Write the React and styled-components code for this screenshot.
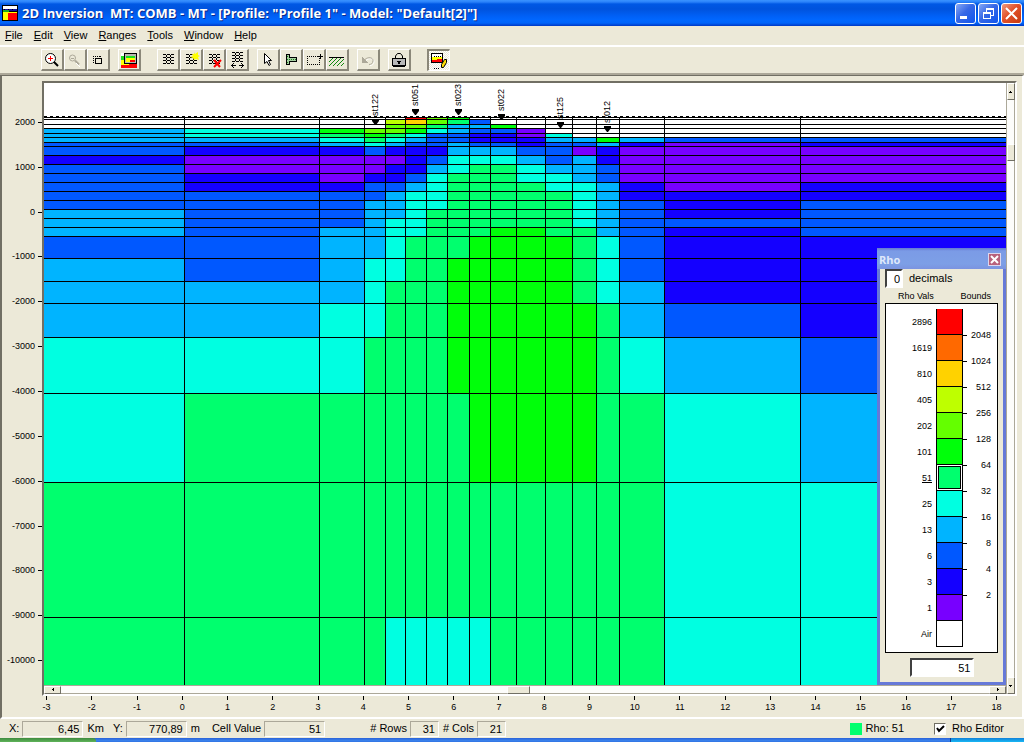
import React, { useState } from "react";
import styled, { createGlobalStyle, css } from "styled-components";

const GlobalStyle = createGlobalStyle`
  * { box-sizing: border-box; }
  body {
    margin: 0;
    background: #ece9d8;
    color: #000;
    font: 11px/13px "Liberation Sans", Arial, sans-serif;
  }
  button, input { font: inherit; color: inherit; margin: 0; padding: 0; border-radius: 0; }
`;

const FACE = "#ece9d8";
const SHADE = "#aca899";
const DARK = "#716f64";

const RHO = {
  W: "#ffffff",
  V: "#7800ff",
  B: "#1400ff",
  b: "#0058ff",
  c: "#00b4ff",
  a: "#00ffe1",
  g: "#00ff6e",
  G: "#00ff0a",
  L: "#64ff00",
  Y: "#beff00",
  y: "#ffd200",
  O: "#ff6900",
  R: "#ff0000",
};

/* ---------- window frame ---------- */

const AppWindow = styled.div`
  min-height: 100vh;
  display: flex;
  flex-direction: column;
`;

const TitleBar = styled.header`
  height: 26px;
  display: flex;
  align-items: center;
  gap: 4px;
  padding: 0 2px;
  background: linear-gradient(#3a93ff 0, #2a82fa 2px, #0058e4 4px, #0053dd 9px, #0060f6 16px, #0067ff 20px, #0064fa 23px, #0038c4 26px);
`;

const WindowTitle = styled.h1`
  flex: 1;
  margin: 0;
  color: #fff;
  font: bold 13px/18px "Open Sans", "Liberation Sans", sans-serif;
  text-shadow: 1px 1px 0 #0a2a8c;
  white-space: pre;
`;

const CaptionButtons = styled.div`
  display: flex;
  gap: 2px;
`;

const CaptionButton = styled.button`
  width: 21px;
  height: 21px;
  border: 1px solid #fff;
  border-radius: 3px;
  background: ${(p) =>
    p.$close
      ? "linear-gradient(135deg, #ee9a80, #e2512a 45%, #c63a10)"
      : "linear-gradient(135deg, #86a8f6, #3768e6 45%, #0f55ee)"};
  svg { display: block; }
`;

const MenuBar = styled.nav`
  height: 19px;
  display: flex;
  align-items: center;
  gap: 11px;
  padding: 0 5px;
`;

const MenuItem = styled.button`
  border: 0;
  background: none;
  line-height: 15px;
  u { text-underline-offset: 1px; }
`;

const ToolBar = styled.div`
  display: flex;
  gap: 8px;
  padding: 2px 0 2px 41px;
  border-top: 2px solid #fff;
  border-bottom: 2px solid ${SHADE};
`;

const ToolGroup = styled.div`
  display: flex;
  margin-right: ${(p) => (p.$wide ? "8px" : "0")};
`;

const ToolButton = styled.button`
  width: 23px;
  height: 22px;
  border: solid;
  border-width: 1px 2px 2px 1px;
  border-color: #fff #8b887a #8b887a #fff;
  background: ${FACE};
  svg { display: block; }
  ${(p) =>
    p.$pressed &&
    css`
      border-width: 2px 1px 1px 2px;
      border-color: #8b887a #fff #fff #8b887a;
      background: repeating-conic-gradient(#fff 0 25%, ${FACE} 0 50%) 0 0 / 2px 2px;
    `}
`;

/* ---------- work area ---------- */

const WorkArea = styled.main`
  flex: 1;
  border: solid;
  border-width: 1px 2px 2px 2px;
  border-color: ${DARK} #fff #fff ${DARK};
  padding: 5px 5px 0 0;
`;

const PlotRow = styled.div`
  display: flex;
`;

const YAxis = styled.div`
  width: 40px;
  padding-top: 19px;
  display: flex;
  flex-direction: column;
  height: 602px;
`;

const YTick = styled.div`
  flex: 1;
  display: flex;
  align-items: center;
  justify-content: flex-end;
  gap: 3px;
  font-size: 9px;
  line-height: 11px;
  &::after {
    content: "";
    width: 4px;
    height: 1px;
    background: #000;
  }
`;

const PlotFrame = styled.div`
  flex: 1;
  min-width: 0;
  display: flex;
  border: solid;
  border-width: 2px;
  border-color: ${DARK} #fff #fff ${DARK};
`;

const PlotColumn = styled.div`
  flex: 1;
  min-width: 0;
`;

const Canvas = styled.div`
  position: relative;
  height: 602px;
  background: #fff;
  > svg { display: block; width: 100%; height: 100%; }
`;

const Station = styled.div`
  position: absolute;
  left: ${(p) => p.$x}%;
  top: ${(p) => p.$tip}px;
  display: flex;
  flex-direction: column;
  align-items: center;
  gap: 3px;
  transform: translate(-50%, -100%);
  font-size: 9px;
  line-height: 10px;
`;

const StationName = styled.span`
  writing-mode: vertical-rl;
  transform: rotate(180deg);
`;

const XAxis = styled.div`
  display: flex;
  margin-right: -2px;
  padding-left: 22px;
  height: 20px;
`;

const XTick = styled.div`
  flex: 1;
  display: flex;
  flex-direction: column;
  align-items: center;
  gap: 2px;
  font-size: 9px;
  line-height: 11px;
  &::before {
    content: "";
    width: 1px;
    height: 4px;
    background: #000;
  }
`;

const ScrollTrack = styled.div`
  display: flex;
  align-items: center;
  justify-content: space-between;
  background: #fdfdfb;
  border: solid ${SHADE};
  flex-direction: ${(p) => (p.$vertical ? "column" : "row")};
  border-width: ${(p) => (p.$vertical ? "0 1px" : "1px 0")};
  ${(p) => (p.$vertical ? "width: 9px;" : "height: 9px;")}
`;

const ScrollPart = styled.button`
  ${(p) => (p.$vertical ? "width: 8px; height: 17px;" : "width: 17px; height: 8px;")}
  display: grid;
  place-items: center;
  border: 1px solid;
  border-color: #fff ${DARK} ${DARK} #fff;
  background: ${FACE};
`;

const ScrollThumb = styled(ScrollPart)`
  ${(p) => (p.$vertical ? "margin-bottom: 472px;" : "width: 23px; margin-right: 13px;")}
`;

/* ---------- Rho palette ---------- */

const Palette = styled.section`
  position: absolute;
  right: 0;
  bottom: 0;
  width: 129px;
  border: 3px solid #6679d8;
  border-top: 0;
  background: ${FACE};
`;

const PaletteTitle = styled.header`
  display: flex;
  align-items: center;
  justify-content: space-between;
  height: 21px;
  margin: 0 -3px;
  padding: 2px 5px 0 2px;
  background: linear-gradient(#6478d0, #7b9be6 3px, #7d9fe6 16px, #7b93e0);
  color: #dfe8fb;
  font: bold 11px/15px "Open Sans", "Liberation Sans", sans-serif;
`;

const PaletteClose = styled.button`
  width: 13px;
  height: 13px;
  border: 1px solid #dcd6ee;
  background: #b8617c;
  svg { display: block; }
`;

const DecimalsRow = styled.label`
  display: flex;
  align-items: center;
  gap: 6px;
  padding-left: 5px;
  height: 19px;
`;

const TextField = styled.input`
  width: ${(p) => p.$w}px;
  height: 19px;
  padding-right: 1px;
  border: 2px solid;
  border-color: #404040 #fff #fff #404040;
  background: #fff;
  text-align: right;
`;

const ScaleHead = styled.div`
  display: flex;
  justify-content: space-between;
  padding: 3px 12px 1px 18px;
  font-size: 9px;
  line-height: 11px;
`;

const Scale = styled.div`
  display: flex;
  margin: 0 5px;
  padding: 5px 0;
  border: 1px solid #000;
  background: #fff;
  font-size: 9px;
  line-height: 11px;
`;

const ScaleValues = styled.div`
  width: 50px;
  padding-right: 4px;
`;

const ScaleValue = styled.div`
  height: 26px;
  display: flex;
  align-items: center;
  justify-content: flex-end;
  text-decoration: ${(p) => (p.$selected ? "underline" : "none")};
`;

const Swatches = styled.div`
  width: 27px;
  border: solid #000;
  border-width: 0 1px;
`;

const Swatch = styled.button`
  display: block;
  width: 100%;
  height: 26px;
  border: 0;
  border-bottom: 1px solid #000;
  background: ${(p) => RHO[p.$tone]};
  ${(p) => p.$selected && "box-shadow: inset 0 0 0 1px #fff, inset 0 0 0 2px #000;"}
`;

const ScaleBounds = styled.div`
  flex: 1;
  padding: 13px 6px 0 0;
`;

const ScaleBound = styled.div`
  height: 26px;
  display: flex;
  align-items: center;
  justify-content: space-between;
  &::before {
    content: "";
    width: 4px;
    height: 1px;
    background: #000;
  }
`;

const CurrentValue = styled.div`
  display: flex;
  justify-content: center;
  padding: 5px 0 5px;
`;

/* ---------- status bar ---------- */

const StatusBar = styled.footer`
  display: flex;
  align-items: center;
  height: 19px;
  padding: 0 20px 0 9px;
`;

const Reading = styled.div`
  display: flex;
  align-items: center;
  gap: 3px;
  margin-right: ${(p) => p.$after}px;
  white-space: nowrap;
`;

const Readout = styled.output`
  width: ${(p) => (p.$short ? 29 : 61)}px;
  height: 16px;
  padding-right: 3px;
  border: 1px solid;
  border-color: ${SHADE} #fff #fff ${SHADE};
  text-align: right;
  line-height: 15px;
`;

const RhoSample = styled.span`
  width: 12px;
  height: 12px;
  background: ${RHO.g};
`;

const StatusRight = styled.div`
  margin-left: auto;
  display: flex;
`;

const CheckLabel = styled.label`
  position: relative;
  display: flex;
  align-items: center;
  gap: 6px;
  svg { position: absolute; left: 0; pointer-events: none; }
`;

const CheckBox = styled.input`
  appearance: none;
  width: 12px;
  height: 12px;
  border: 1px solid;
  border-color: ${DARK} #fff #fff ${DARK};
  background: #fff;
`;

const TaskStrip = styled.div`
  height: 4px;
  display: flex;
  background: linear-gradient(#2a62d8, #3c86ee 3px, #2a6ade);
`;

const StartEdge = styled.div`
  width: 96px;
  border-top-right-radius: 3px;
  background: linear-gradient(#3f8a3f, #5fb45a);
`;

const TrayEdge = styled.div`
  width: 74px;
  margin-left: auto;
  border-left: 1px solid #103a90;
  background: linear-gradient(#1280d8, #18b8f4);
`;

/* ---------- icons ---------- */

const Icon = ({ children, w = 20, h = 19 }) => (
  <svg width={w} height={h} viewBox={`0 0 ${w} ${h}`} shapeRendering="crispEdges" aria-hidden="true">
    {children}
  </svg>
);

const Mesh = ({ y = 0 }) => (
  <g transform={`translate(0 ${y})`} stroke="#000" fill="none">
    <path d="M5 4.500h3m1 0h3m1 0h3M5 7.500h3m1 0h3m1 0h3M5 10.500h3m1 0h3m1 0h3M5 13.500h3m1 0h3m1 0h3" />
    <path d="M8.500 5v2m0 1v2m0 1v2M12.500 5v2m0 1v2m0 1v2" />
  </g>
);

const icons = {
  zoomIn: (
    <Icon>
      <circle cx="8.500" cy="8.500" r="5" fill="#fff" stroke="#000" shapeRendering="auto" />
      <path d="M6 8.500h5M8.500 6v5" stroke="#f00" />
      <path d="M12 12l4 4" stroke="#000" strokeWidth="2" shapeRendering="auto" />
    </Icon>
  ),
  zoomOut: (
    <Icon>
      <circle cx="7.500" cy="8" r="3" fill="none" stroke={SHADE} shapeRendering="auto" />
      <path d="M6 8.500h3" stroke={SHADE} />
      <path d="M10 10.500l4 4" stroke={SHADE} strokeWidth="2" shapeRendering="auto" />
      <path d="M11 13l4 4" stroke="#fff" shapeRendering="auto" />
    </Icon>
  ),
  extents: (
    <Icon>
      <path d="M5 6.500h8M5 12.500h3M5.500 6v7M12.500 6v3" stroke="#000" strokeDasharray="1 1" />
      <rect x="7.500" y="8.500" width="6" height="5" fill="none" stroke="#000" />
    </Icon>
  ),
  model: (
    <Icon>
      <path d="M2 3h3v3H2z" fill="#fff" />
      <path d="M2 6h4v4H2z" fill="#1fe01f" />
      <path d="M2 10h4v4H2z" fill="#ff0" />
      <path d="M2 14h16v4H2z" fill="#f00" />
      <path d="M2 14h8v1H2z" fill="#ff0" />
      <path d="M5 3h13v11H5z" fill="#000" />
      <path d="M6 4h11v9H6z" fill="#b8b8b0" />
      <path d="M7 6h9v6H7z" fill="#1fe01f" />
      <path d="M7 8h9v4H7z" fill="#ff0" />
      <path d="M11 10h5v2h-5z" fill="#f00" />
    </Icon>
  ),
  mesh: <Icon><Mesh /></Icon>,
  meshNew: (
    <Icon>
      <Mesh />
      <path d="M13 2l1 2 3-2v3l2 1-2 1 1 3-3-1-2 1-1-2-3-1 3-1-1-2 2 0z" fill="#ff0" shapeRendering="auto" />
    </Icon>
  ),
  meshDelete: (
    <Icon>
      <Mesh />
      <path d="M10 10l6 7M17 10l-7 7" stroke="#f00" strokeWidth="2" shapeRendering="auto" />
    </Icon>
  ),
  meshStretch: (
    <Icon>
      <Mesh y={-2} />
      <path d="M4 15.500h5M12 15.500h5M5.500 14v1M6.500 13v1M5.500 16v1M6.500 17v1M15.500 14v1M14.500 13v1M15.500 16v1M14.500 17v1" stroke="#000" />
    </Icon>
  ),
  pointer: (
    <Icon>
      <path d="M6.500 3.500v10l2.500-2 2 4 1.500-1-2-4h3z" fill="#fff" stroke="#000" shapeRendering="auto" />
    </Icon>
  ),
  tee: (
    <Icon>
      <path d="M5.500 4.500h3v3h7v4h-7v3h-3z" fill="#a6cfa0" stroke="#000" />
      <path d="M6 6.500h2M6 9.500h9M6 12.500h2" stroke="#1c7a1c" strokeDasharray="1 1" />
    </Icon>
  ),
  select: (
    <Icon>
      <path d="M3 6.500h11M3 14.500h13M3.500 6v9M15.500 8v7" fill="none" stroke="#000" strokeDasharray="1 1" />
      <path d="M14 6.500h5M16.500 4v5" stroke="#000" />
    </Icon>
  ),
  hatch: (
    <Icon>
      <path d="M2 7.500h15" stroke="#000" />
      <path d="M2 12l4-4M2 16l8-8M6 16l8-8M10 16l7-7M14 16l3-3" stroke="#108a10" shapeRendering="auto" />
    </Icon>
  ),
  undo: (
    <Icon>
      <path d="M7 9.500c3-3 8-2 8 1s-2 4-4 4" fill="none" stroke="#fff" transform="translate(1 1)" shapeRendering="auto" />
      <path d="M7 9.500c3-3 8-2 8 1s-2 4-4 4" fill="none" stroke={SHADE} shapeRendering="auto" />
      <path d="M4 7v6h6z" fill={SHADE} />
    </Icon>
  ),
  lock: (
    <Icon>
      <path d="M6.500 8V6l2-2.500h3l2 2.500v2" fill="none" stroke="#000" shapeRendering="auto" />
      <rect x="3.500" y="8.500" width="13" height="7" fill="#b8b8b8" stroke="#000" />
      <path d="M4 16.500h12" stroke="#000" />
      <path d="M8 11h4v1h-1v2H9v-2H8z" fill="#000" />
    </Icon>
  ),
  rhoEditor: (
    <Icon>
      <rect x="2.500" y="2.500" width="11" height="9" fill="#fff" stroke="#000" />
      <path d="M5 5.500h7" stroke="#000" strokeDasharray="1 1" />
      <path d="M3 6h10v2H3z" fill="#ff0" />
      <path d="M3 8h10v3H3z" fill="#f00" />
      <path d="M3 7h5v2H3z" fill="#ff0" />
      <path d="M15.500 8.500h2v3l-3 5h-2v-3z" fill="#fd0" stroke="#000" shapeRendering="auto" />
      <path d="M5 17.500h6" stroke="#000" strokeDasharray="1 1" />
    </Icon>
  ),
};

const AppIcon = () => (
  <Icon w={16} h={16}>
    <path d="M0 0h16v16H0z" fill="#000" />
    <path d="M1 1h14v3H1z" fill="#fff" />
    <path d="M1 4h14v2H1z" fill="#12129c" />
    <path d="M1 5h6v2H1z" fill="#1faa1f" />
    <path d="M1 7h14v8H1z" fill="#ff0" />
    <path d="M6 8h9v7H6z" fill="#f00" />
    <path d="M2 4h1M6 4h1M10 4h1" stroke="#000" />
  </Icon>
);

/* ---------- model data ---------- */

const COLS = [0, 140, 275, 320, 341, 361, 382, 403, 425, 446, 472, 501, 528, 552, 575, 620, 756, 962];
const ROWS = [34, 36, 41, 45, 50, 54, 59, 63, 72, 81, 90, 99, 108, 117, 126, 135, 144, 153, 175, 198, 220, 254, 310, 399, 534, 602];
const CELLS = [
  "WWWWWRLGWWWWWWWWW",
  "WWWWYyLgbWWWWWWWW",
  "WWWWLLgccGWWWWWWW",
  "caGLLGacbbVWWWWWW",
  "cagGgabbBBVaWWWWW",
  "ccagacbbBBBccGcbb",
  "bbcacbbcbbBbbcBVB",
  "bBBbBBBcccbbVBVVV",
  "BVVVVBbaaacbcBVVV",
  "bVVVBBcaggaccbVVV",
  "bBVBBbagggaacbVVV",
  "bBBbbcaggggaacBVB",
  "bbbbcaagggggacBBB",
  "bbbccaagggggacbBb",
  "cbbccaggggggacbBb",
  "cbbcaaggggggacbbb",
  "cbccaagggGGggcbBb",
  "bbccagggGGGGgabBB",
  "cbcaaggGGGGGgabBB",
  "cccagggGGGGGgacBB",
  "ccaagggGGGGGGgcbB",
  "aaaggggGGGGGGgacb",
  "agggggggGGGGGggac",
  "gggggggggggggggaa",
  "ggggaaaaaggggggaa",
];

const STATIONS = [
  { name: "st122", x: 331, tip: 42 },
  { name: "st051", x: 371, tip: 32 },
  { name: "st023", x: 414, tip: 32 },
  { name: "st022", x: 457, tip: 37 },
  { name: "st125", x: 516, tip: 45 },
  { name: "st012", x: 563, tip: 49 },
];

const SCALE = [
  ["2896", "R"], ["1619", "O"], ["810", "y"], ["405", "Y"], ["202", "L"], ["101", "G"], ["51", "g"],
  ["25", "a"], ["13", "c"], ["6", "b"], ["3", "B"], ["1", "V"], ["Air", "W"],
];
const BOUNDS = [2048, 1024, 512, 256, 128, 64, 32, 16, 8, 4, 2];

const MENUS = ["File", "Edit", "View", "Ranges", "Tools", "Window", "Help"];
const TOOLS = [
  { items: [["zoomIn", "Zoom in"], ["zoomOut", "Zoom out"], ["extents", "Full view"]] },
  { items: [["model", "Model"]], wide: true },
  { items: [["mesh", "Mesh"], ["meshNew", "New mesh"], ["meshDelete", "Delete mesh"], ["meshStretch", "Stretch mesh"]] },
  { items: [["pointer", "Pointer"], ["tee", "Edit line"], ["select", "Select area"], ["hatch", "Topography"]] },
  { items: [["undo", "Undo"]] },
  { items: [["lock", "Lock"]], wide: true },
  { items: [["rhoEditor", "Rho editor"]] },
];

const range = (from, count, step) => Array.from({ length: count }, (_, i) => from + i * step);

function ModelChart() {
  return (
    <svg viewBox="0 0 962 602" preserveAspectRatio="none" shapeRendering="crispEdges" role="img" aria-label="Resistivity model">
      {CELLS.map((row, r) =>
        [...row].map((tone, c) => (
          <rect key={`${r}-${c}`} x={COLS[c]} y={ROWS[r]} width={COLS[c + 1] - COLS[c]} height={ROWS[r + 1] - ROWS[r]} fill={RHO[tone]} />
        ))
      )}
      <path d="M0 33.500h962" stroke="#000" strokeDasharray="3 3" />
      <path
        d={ROWS.slice(0, -1).map((y) => `M0 ${y + 0.5}h962`).join("") + COLS.slice(1, -1).map((x) => `M${x + 0.5} 34v568`).join("")}
        stroke="#000"
      />
    </svg>
  );
}

function RhoPalette({ onClose }) {
  const [selected, setSelected] = useState("51");
  return (
    <Palette aria-label="Rho">
      <PaletteTitle>
        Rho
        <PaletteClose aria-label="Close" onClick={onClose}>
          <svg width="11" height="11" viewBox="0 0 11 11"><path d="M2 2l7 7M9 2l-7 7" stroke="#fff" strokeWidth="2" /></svg>
        </PaletteClose>
      </PaletteTitle>
      <DecimalsRow>
        <TextField $w={18} defaultValue="0" />
        decimals
      </DecimalsRow>
      <ScaleHead><span>Rho Vals</span><span>Bounds</span></ScaleHead>
      <Scale>
        <ScaleValues>
          {SCALE.map(([v]) => <ScaleValue key={v} $selected={v === selected}>{v}</ScaleValue>)}
        </ScaleValues>
        <Swatches>
          {SCALE.map(([v, tone]) => (
            <Swatch key={v} aria-label={v} $tone={tone} $selected={v === selected} onClick={() => setSelected(v)} />
          ))}
        </Swatches>
        <ScaleBounds>
          {BOUNDS.map((v) => <ScaleBound key={v}>{v}</ScaleBound>)}
        </ScaleBounds>
      </Scale>
      <CurrentValue>
        <TextField $w={64} aria-label="Rho value" value={selected} readOnly />
      </CurrentValue>
    </Palette>
  );
}

export default function App() {
  const [editor, setEditor] = useState(true);
  return (
    <AppWindow>
      <GlobalStyle />
      <TitleBar>
        <AppIcon />
        <WindowTitle>{'2D Inversion  MT: COMB - MT - [Profile: "Profile 1" - Model: "Default[2]"]'}</WindowTitle>
        <CaptionButtons>
          <CaptionButton aria-label="Minimize"><Icon w={19} h={19}><path d="M4 12h7v3H4z" fill="#fff" /></Icon></CaptionButton>
          <CaptionButton aria-label="Restore">
            <Icon w={19} h={19}>
              <path d="M7 4h8v2H7zM13 6h2v6h-3v-1h2V6zM7 6h1v2H7zM4 8h8v2H4zM4 10h1v5H4zM11 10h1v5h-1zM4 14h8v1H4z" fill="#fff" />
            </Icon>
          </CaptionButton>
          <CaptionButton $close aria-label="Close">
            <svg width="19" height="19" viewBox="0 0 19 19"><path d="M4 4l11 11M15 4l-11 11" stroke="#fff" strokeWidth="2" /></svg>
          </CaptionButton>
        </CaptionButtons>
      </TitleBar>
      <MenuBar>
        {MENUS.map((m) => <MenuItem key={m}><u>{m[0]}</u>{m.slice(1)}</MenuItem>)}
      </MenuBar>
      <ToolBar role="toolbar">
        {TOOLS.map((group, i) => (
          <ToolGroup key={i} $wide={group.wide}>
            {group.items.map(([id, label]) => (
              <ToolButton key={id} aria-label={label} $pressed={id === "rhoEditor" && editor} onClick={id === "rhoEditor" ? () => setEditor(!editor) : undefined}>
                {icons[id]}
              </ToolButton>
            ))}
          </ToolGroup>
        ))}
      </ToolBar>
      <WorkArea>
        <PlotRow>
          <YAxis>
            {range(2000, 13, -1000).map((v) => <YTick key={v}>{v}</YTick>)}
          </YAxis>
          <PlotFrame>
            <PlotColumn>
              <Canvas>
                <ModelChart />
                {STATIONS.map((s) => (
                  <Station key={s.name} $x={(s.x / 962) * 100} $tip={s.tip}>
                    <StationName>{s.name}</StationName>
                    <svg width="7" height="6" viewBox="0 0 7 6"><path d="M0 0h7v2L4 6H3L0 2z" /></svg>
                  </Station>
                ))}
                {editor && <RhoPalette onClose={() => setEditor(false)} />}
              </Canvas>
              <ScrollTrack>
                <ScrollPart aria-label="Scroll left"><Icon w={2} h={3}><path d="M1 0h1v3H1zM0 1h1v1H0z" /></Icon></ScrollPart>
                <ScrollThumb aria-label="Horizontal position" />
                <ScrollPart aria-label="Scroll right"><Icon w={2} h={3}><path d="M0 0h1v3H0zM1 1h1v1H1z" /></Icon></ScrollPart>
              </ScrollTrack>
            </PlotColumn>
            <ScrollTrack $vertical>
              <ScrollPart $vertical aria-label="Scroll up"><Icon w={3} h={2}><path d="M0 1h3v1H0zM1 0h1v1H1z" /></Icon></ScrollPart>
              <ScrollThumb $vertical aria-label="Vertical position" />
              <ScrollPart $vertical aria-label="Scroll down"><Icon w={3} h={2}><path d="M0 0h3v1H0zM1 1h1v1H1z" /></Icon></ScrollPart>
            </ScrollTrack>
          </PlotFrame>
        </PlotRow>
        <XAxis>
          {range(-3, 22, 1).map((v) => <XTick key={v}>{v}</XTick>)}
        </XAxis>
      </WorkArea>
      <StatusBar>
        <Reading $after={4}>X:<Readout>6,45</Readout></Reading>
        <Reading $after={9}>Km</Reading>
        <Reading $after={4}>Y:<Readout>770,89</Readout></Reading>
        <Reading $after={12}>m</Reading>
        <Reading $after={45}>Cell Value<Readout>51</Readout></Reading>
        <Reading $after={4}># Rows<Readout $short>31</Readout></Reading>
        <Reading $after={4}># Cols<Readout $short>21</Readout></Reading>
        <StatusRight>
          <Reading $after={30}><RhoSample />Rho: 51</Reading>
          <CheckLabel>
            <CheckBox type="checkbox" checked={editor} onChange={(e) => setEditor(e.target.checked)} />
            {editor && <svg width="12" height="12" viewBox="0 0 12 12"><path d="M3 5l2 3 5-5" fill="none" stroke="#000" strokeWidth="2" /></svg>}
            Rho Editor
          </CheckLabel>
        </StatusRight>
      </StatusBar>
      <TaskStrip><StartEdge /><TrayEdge /></TaskStrip>
    </AppWindow>
  );
}
